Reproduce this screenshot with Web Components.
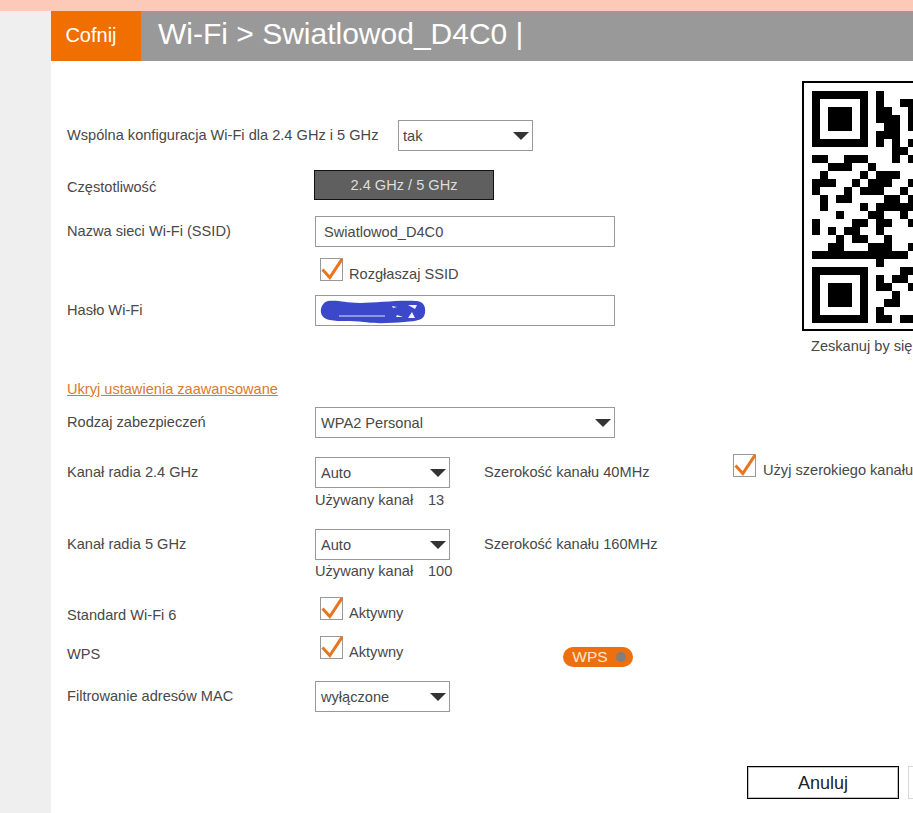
<!DOCTYPE html>
<html lang="pl">
<head>
<meta charset="utf-8">
<title>Wi-Fi</title>
<style>
html,body{margin:0;padding:0;height:100%;overflow:hidden;background:#fff;font-family:"Liberation Sans",Arial,sans-serif;font-size:14.6px;color:#484848}
</style>
</head>
<body>
<router-page>
  <wifi-header slot="header" back="Cofnij" title-text="Wi-Fi &gt; Swiatlowod_D4C0 |"></wifi-header>

  <div slot="basic">
    <form-row label="Wspólna konfiguracja Wi-Fi dla 2.4 GHz i 5 GHz" style="--label-w:331px;margin-top:59px">
      <drop-select value="tak" style="width:135px;--pad:4px"></drop-select>
    </form-row>
    <form-row label="Częstotliwość" style="margin-top:19px;--nudge:4px;--row-h:26px;--ctl-x:-1px">
      <band-badge>2.4 GHz / 5 GHz</band-badge>
    </form-row>
    <form-row label="Nazwa sieci Wi-Fi (SSID)" style="margin-top:16px">
      <text-field value="Swiatlowod_D4C0"></text-field>
    </form-row>
    <form-row style="margin-top:11px;--ctl-x:5px;--row-h:23px">
      <check-box label="Rozgłaszaj SSID"></check-box>
    </form-row>
    <form-row label="Hasło Wi-Fi" style="margin-top:13px">
      <text-field scribbled></text-field>
    </form-row>
  </div>
  <qr-panel slot="qr" caption="Zeskanuj by się"></qr-panel>

  <div slot="advanced">
    <toggle-link style="margin-top:27px">Ukryj ustawienia zaawansowane</toggle-link>
    <form-row label="Rodzaj zabezpieczeń" style="margin-top:10px">
      <drop-select value="WPA2 Personal" style="width:300px"></drop-select>
    </form-row>
    <form-row label="Kanał radia 2.4 GHz" style="margin-top:19px">
      <channel-group value="Auto" width-text="Szerokość kanału 40MHz" used="13">
        <check-box label="Użyj szerokiego kanału" style="margin-top:-3px;--gap:7px"></check-box>
      </channel-group>
    </form-row>
    <form-row label="Kanał radia 5 GHz" style="margin-top:21px">
      <channel-group value="Auto" width-text="Szerokość kanału 160MHz" used="100" style="--used-gap:3px"></channel-group>
    </form-row>
    <form-row label="Standard Wi-Fi 6" style="margin-top:18px;--nudge:6px;--ctl-x:5px;--row-h:24px">
      <check-box label="Aktywny"></check-box>
    </form-row>
    <form-row label="WPS" style="margin-top:9px;--nudge:6px;--ctl-x:5px;--row-h:24px">
      <check-box label="Aktywny"></check-box>
      <wps-pill style="margin:11px 0 0 160px">WPS</wps-pill>
    </form-row>
    <form-row label="Filtrowanie adresów MAC" style="margin-top:14px">
      <drop-select value="wyłączone" style="width:135px"></drop-select>
    </form-row>
  </div>

  <action-bar slot="actions"></action-bar>
</router-page>

<script>
function shadow(el, html){ el.attachShadow({mode:'open'}).innerHTML = html; }
function esc(s){ return String(s==null?'':s).replace(/&/g,'&amp;').replace(/</g,'&lt;'); }

customElements.define('router-page', class extends HTMLElement{
  constructor(){ super(); shadow(this, `<style>
    :host{display:flex;flex-direction:column;height:813px;overflow:hidden}
    .strip{height:11px;background:#fdc9b9;flex:none}
    .frame{flex:1;display:flex;min-height:0}
    .gutter{width:51px;background:#efefef;flex:none}
    .main{flex:1;min-width:0;overflow:hidden;background:#fff;display:flex;flex-direction:column}
    .top{display:flex;flex:none}
    .basic{width:751px;flex:none;box-sizing:border-box;padding-left:16px}
    .adv{padding-left:16px;flex:none}
    .acts{margin-top:54px;padding-left:696px;flex:none}
  </style>
  <div class="strip"></div>
  <div class="frame"><div class="gutter"></div><div class="main">
    <slot name="header"></slot>
    <div class="top"><div class="basic"><slot name="basic"></slot></div><slot name="qr"></slot></div>
    <div class="adv"><slot name="advanced"></slot></div>
    <div class="acts"><slot name="actions"></slot></div>
  </div></div>`); }
});

customElements.define('wifi-header', class extends HTMLElement{
  connectedCallback(){ if(this.shadowRoot) return; shadow(this, `<style>
    :host{display:flex;height:50px;background:#999;color:#fff;flex:none}
    .back{box-sizing:border-box;width:90px;background:#f16e00;display:flex;align-items:center;justify-content:center;font-size:20px;flex:none;padding:0 10px 2px 0}
    h1{margin:0 0 0 17px;font-weight:400;font-size:30px;line-height:46px;white-space:nowrap}
  </style><div class="back">${esc(this.getAttribute('back'))}</div><h1>${esc(this.getAttribute('title-text'))}</h1>`); }
});

customElements.define('form-row', class extends HTMLElement{
  connectedCallback(){ if(this.shadowRoot) return; const l=this.getAttribute('label')||''; shadow(this, `<style>
    :host{display:grid;grid-template-columns:var(--label-w,248px) 1fr;align-items:start}
    .l{line-height:var(--row-h,31px);margin-top:var(--nudge,0);white-space:nowrap}
    .c{display:flex;align-items:flex-start;margin-left:var(--ctl-x,0);white-space:nowrap}
  </style><div class="l">${esc(l)}</div><div class="c"><slot></slot></div>`); }
});

customElements.define('drop-select', class extends HTMLElement{
  connectedCallback(){ if(this.shadowRoot) return; shadow(this, `<style>
    :host{display:flex;align-items:center;justify-content:space-between;box-sizing:border-box;height:31px;border:1px solid #999;padding:0 3px 0 var(--pad,5px);background:#fff;flex:none}
    span{padding-top:1px}
    svg{display:block;margin-top:1px}
  </style><span>${esc(this.getAttribute('value'))}</span><svg width="16" height="8" viewBox="0 0 16 8"><path d="M0 0H16L8 8Z" fill="#333"/></svg>`); }
});

customElements.define('band-badge', class extends HTMLElement{
  constructor(){ super(); shadow(this, `<style>
    :host{display:flex;align-items:center;justify-content:center;box-sizing:border-box;width:180px;height:30px;background:#5f5f5f;border:1px solid #111;color:#ddd}
  </style><slot></slot>`); }
});

customElements.define('text-field', class extends HTMLElement{
  connectedCallback(){ if(this.shadowRoot) return;
    const blob = this.hasAttribute('scribbled') ? `<svg class="blob" width="106" height="24" viewBox="0 0 106 24">
      <path d="M8 1C20 0 24 3 40 3S78 0 96 1C103 1 106 6 105 13C104 20 98 21 84 22C70 23 58 24 44 22C30 20 20 22 10 20C3 19 0 14 1 9C2 5 4 2 8 1Z" fill="#3a48c9"/>
      <path d="M19 16H65" stroke="#dfe3f6" stroke-width="1"/><path d="M77 15l6 2h-7zM88 18l4-6 3 6zM72 6l5 1-4 1zM88 5h9l-2 4z" fill="#f1f3fb"/></svg>` : '';
    shadow(this, `<style>
    :host{display:flex;align-items:center;box-sizing:border-box;width:300px;height:31px;border:1px solid #999;padding:0 8px;background:#fff;position:relative}
    .blob{position:absolute;left:4px;top:4px}
  </style><span>${esc(this.getAttribute('value'))}</span>${blob}`); }
});

customElements.define('check-box', class extends HTMLElement{
  connectedCallback(){ if(this.shadowRoot) return; shadow(this, `<style>
    :host{display:inline-flex;align-items:flex-start;flex:none}
    svg{display:block;flex:none}
    span{margin:8px 0 0 var(--gap,6px);line-height:16px;white-space:nowrap}
  </style><svg width="23" height="23" viewBox="0 0 23 23"><rect x=".5" y=".5" width="22" height="22" fill="#fff" stroke="#999"/><path d="M2.5 11.5L9.8 19.5L22 1.2" fill="none" stroke="#e8761f" stroke-width="3"/></svg><span>${esc(this.getAttribute('label'))}</span>`); }
});

customElements.define('toggle-link', class extends HTMLElement{
  constructor(){ super(); shadow(this, `<style>
    :host{display:block;line-height:16px;color:#e0782a;text-decoration:underline;white-space:nowrap}
  </style><slot></slot>`); }
});

customElements.define('channel-group', class extends HTMLElement{
  connectedCallback(){ if(this.shadowRoot) return; shadow(this, `<style>
    :host{display:block;flex:none}
    .top{display:flex;align-items:flex-start}
    drop-select{width:135px}
    .w{margin-left:34px;width:249px;line-height:31px;white-space:nowrap;flex:none}
    .used{display:flex;line-height:16px;margin-top:var(--used-gap,4px)}
    .used b{font-weight:400;width:113px}
  </style><div class="top"><drop-select value="${esc(this.getAttribute('value'))}"></drop-select><div class="w">${esc(this.getAttribute('width-text'))}</div><slot></slot></div>
  <div class="used"><b>Używany kanał</b><span>${esc(this.getAttribute('used'))}</span></div>`); }
});

customElements.define('wps-pill', class extends HTMLElement{
  constructor(){ super(); shadow(this, `<style>
    :host{display:flex;align-items:center;box-sizing:border-box;width:70px;height:20px;border-radius:10px;background:#ee6f0e;color:#fde7d0;font-size:15.5px;padding:0 7px 0 9px;flex:none}
    i{width:10px;height:10px;border-radius:50%;background:#7f7f80;margin-left:auto}
  </style><slot></slot><i></i>`); }
});

customElements.define('qr-panel', class extends HTMLElement{
  connectedCallback(){ if(this.shadowRoot) return;
    const rows=["1111111010000","1000001010011","1011101011001","1011101011101","1011101001101","1000001011100","1111111010101","0000000000110","1100111000101","0011100100000","0100001011100","1110010111001","1000101110010","0101100001101","0100001011111","0001000110010","1000011011001","1010110010000","0001011001000","0011000111001","1111111111110","0000000010000","1111111000011","1000001010110","1011101011001","1011101000100","1011101001100","1000001010000","1111111011011"];
    let r='';
    rows.forEach((row,y)=>{ [...row].forEach((c,x)=>{ if(c==='1') r+=`<rect x="${x*8}" y="${y*8}" width="8" height="8"/>`; }); });
    shadow(this, `<style>
    :host{display:block;flex:none;margin-top:20px;width:252px}
    .box{box-sizing:border-box;height:250px;border:2px solid #000;padding:8px}
    svg{display:block}
    p{margin:7px 0 0 9px;line-height:16px;white-space:nowrap}
  </style><div class="box"><svg width="232" height="232" viewBox="0 0 232 232" shape-rendering="crispEdges" fill="#000">${r}</svg></div><p>${esc(this.getAttribute('caption'))}</p>`); }
});

customElements.define('action-bar', class extends HTMLElement{
  constructor(){ super(); shadow(this, `<style>
    :host{display:flex;gap:9px;white-space:nowrap}
    .b{box-sizing:border-box;width:152px;height:33px;display:flex;align-items:center;justify-content:center;flex:none;font-size:18px;color:#222;padding-top:1px}
    .a{border:1px solid #000;box-shadow:inset 0 0 0 1px rgba(0,0,0,.25)}
    .n{border:1px solid #d8d8d8}
  </style><div class="b a">Anuluj</div><div class="b n"></div>`); }
});
</script>
</body>
</html>
